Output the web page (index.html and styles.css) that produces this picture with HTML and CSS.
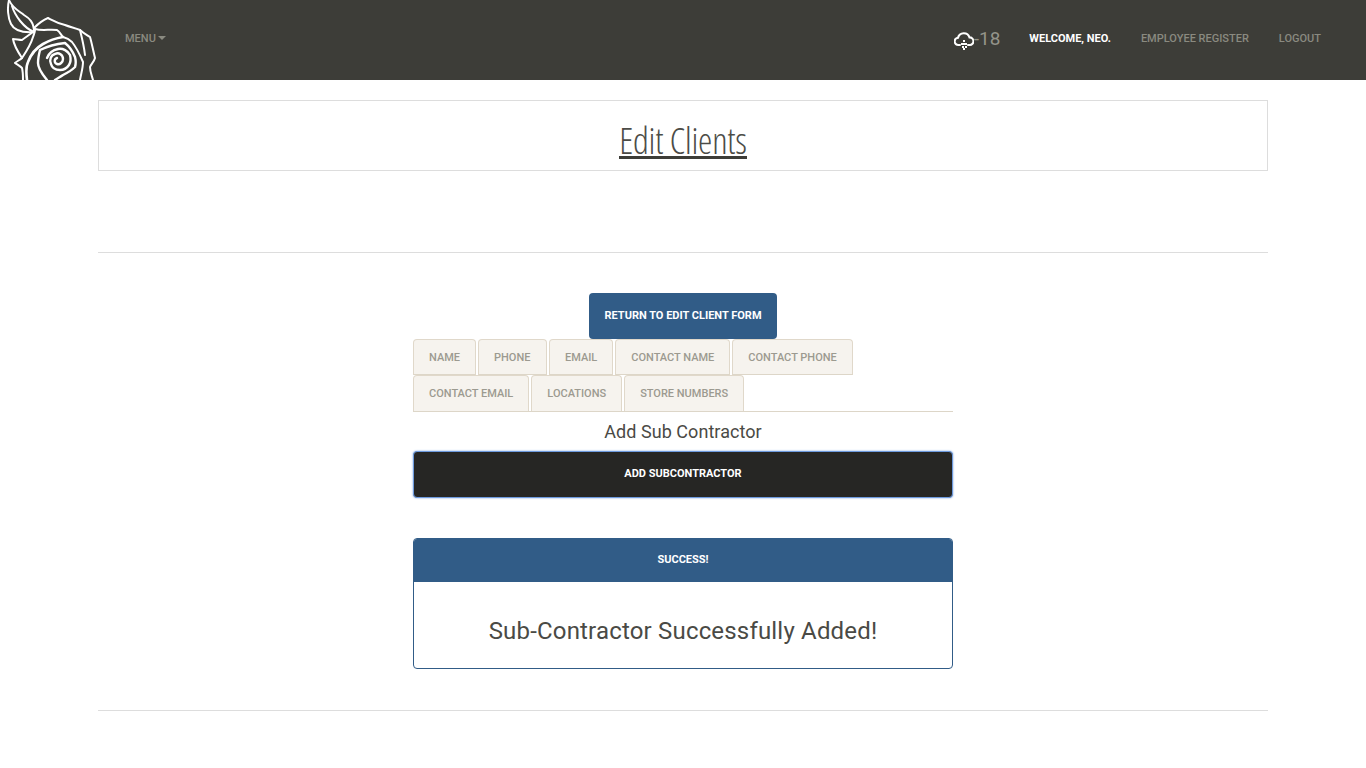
FILE: index.html
```html
<!DOCTYPE html>
<html lang="en">
<head>
<meta charset="utf-8">
<title>Edit Clients</title>
<link rel="stylesheet" href="styles.css">
</head>
<body>
<header class="topbar">
  <div class="nav-left">
    <svg class="logo" viewBox="0 0 100 80" fill="none" stroke="#fff" stroke-width="2" stroke-linejoin="round" stroke-linecap="round">
      <path d="M9 0C7 8 8 18 11 24C14 30 20 33 34 32"/>
      <path d="M9 0C12 8 19 11 24 15C29 18 34 22 34 32"/>
      <path d="M12 6C15 16 24 28 34 32"/>
      <path d="M34 28C38 24 43 20 48 18C52 20 57 23 65 25C70 27 75 28 80 30C83 33 87 35 90 37C92 44 93 50 95 58C94 62 91 64 90 67C90 72 92 76 93 80"/>
      <path d="M33 32C29 35 26 37 22 40C19 40 16 39 13 39C14 46 18 52 22 58C20 60 17 61 15 63C18 65 20 66 22 68C23 72 23 76 23 80"/>
      <path d="M35 29C42 31 50 29 57 30C60 32 61 35 63 37C67 38 70 40 72 42C76 47 80 55 83 62C83 68 81 74 80 80"/>
      <path d="M80 30C82 38 84 46 85 55"/>
      <path stroke-width="2.6" d="M27 80C26 72 26 66 28 62C31 54 36 48 43 44C50 40 57 38 63 37"/>
      <path d="M22 58C26 52 31 44 33 37C34 34 35 32 35 30"/>
      <path stroke-width="2.4" d="M47 80C42 74 38 68 38 63C38 58 39 54 40 50C46 47 56 44 65 43C70 47 73 52 75 57C76 61 76 64 75 67C71 71 67 73 63 75C60 77 58 78 55 80"/>
      <path stroke-width="2.4" d="M47 58C49 53 53 50 58 49C63 48 68 51 70 55C71 59 71 62 69 65C67 68 64 70 60 70C56 70 52 68 51 64C49 60 51 55 55 54C59 52 63 55 63 59C63 62 60 65 57 64C54 63 54 59 57 58"/>
    </svg>
    <a class="nav-link menu" href="#">MENU<span class="caret"></span></a>
  </div>
  <div class="nav-right">
    <div class="weather">
      <svg class="cloud" viewBox="0 0 20 19" fill="none" stroke="#fff" stroke-width="2.1" stroke-linecap="round">
        <path d="M6 14H4.5A3.6 3.6 0 0 1 4 6.8A6 6 0 0 1 15.5 6.4A3.8 3.8 0 0 1 15.8 14H14"/>
        <g class="flakes" stroke="none" fill="#fff">
          <rect x="9" y="9" width="2" height="2"/><rect x="7" y="12" width="2" height="2"/><rect x="9" y="12" width="2" height="2"/><rect x="11" y="12" width="2" height="2"/><rect x="8" y="15" width="2" height="2"/><rect x="11" y="15" width="2" height="2"/><rect x="9" y="17" width="2" height="2"/>
        </g>
      </svg>
      <span class="temp">-18</span>
    </div>
    <span class="nav-link welcome">WELCOME, NEO.</span>
    <a class="nav-link" href="#">EMPLOYEE REGISTER</a>
    <a class="nav-link" href="#">LOGOUT</a>
  </div>
</header>
<main class="page">
  <div class="title-box"><h1 class="title">Edit Clients</h1></div>
  <hr class="rule rule-top">
  <section class="content">
    <a class="btn-return" href="#">RETURN TO EDIT CLIENT FORM</a>
    <ul class="tabs">
      <li class="tab">NAME</li>
      <li class="tab tab-wide">PHONE</li>
      <li class="tab">EMAIL</li>
      <li class="tab">CONTACT NAME</li>
      <li class="tab">CONTACT PHONE</li>
      <li class="tab">CONTACT EMAIL</li>
      <li class="tab">LOCATIONS</li>
      <li class="tab">STORE NUMBERS</li>
    </ul>
    <h2 class="sub-title">Add Sub Contractor</h2>
    <button class="btn-add" type="button">ADD SUBCONTRACTOR</button>
    <div class="panel">
      <div class="panel-head">SUCCESS!</div>
      <div class="panel-body">Sub-Contractor Successfully Added!</div>
    </div>
  </section>
  <hr class="rule rule-bottom">
</main>
</body>
</html>
```
FILE: styles.css
```css
* { box-sizing: border-box; }
html, body { margin: 0; padding: 0; }
body { background: #fff; color: #3d3d38; font-family: Roboto, "Liberation Sans", sans-serif; height: 768px; overflow: hidden; }
a { text-decoration: none; color: inherit; }

.topbar { height: 80px; background: #3d3d38; display: flex; justify-content: space-between; align-items: center; }
.nav-left { display: flex; align-items: center; height: 80px; }
.logo { width: 100px; height: 80px; display: block; }
.nav-link { font-size: 11px; font-weight: 500; color: #8a8a80; }
.menu { margin-left: 25px; display: flex; align-items: center; margin-top: -4px; }
.caret { width: 0; height: 0; margin-left: 2px; border-left: 4px solid transparent; border-right: 4px solid transparent; border-top: 4px solid #8a8a80; }
.nav-right { display: flex; align-items: center; padding-right: 45px; margin-top: -4px; }
.weather { display: flex; align-items: center; margin-right: 29px; }
.cloud { width: 20px; height: 19px; display: block; margin-top: 4px; }
.flakes { shape-rendering: crispEdges; }
.temp { font-size: 19px; color: #94948a; }
.welcome { color: #fff; font-weight: 700; margin-right: 30px; }
.nav-right a + a { margin-left: 30px; }

.page { width: 1170px; margin: 20px auto 0; }
.title-box { height: 71px; border: 1px solid #ddd; display: flex; justify-content: center; }
.title { margin: 21px 0 0; height: 37px; font-family: "Open Sans", sans-serif; font-weight: 300; font-stretch: 75%; font-size: 36px; letter-spacing: -0.17px; line-height: 38px; color: #4c4c47; border-bottom: 3px solid #3d3d38; }
.rule { border: 0; border-top: 1px solid #ddd; margin: 0; }
.rule-top { margin-top: 81px; }
.content { width: 540px; margin: 40px auto 0; display: flex; flex-direction: column; align-items: stretch; }
.btn-return { align-self: center; width: 188px; height: 46px; padding-bottom: 2px; background: #315c87; color: #fff; border-radius: 4px; font-size: 11px; font-weight: 700; display: flex; align-items: center; justify-content: center; }
.tabs { list-style: none; margin: 0; padding: 0; display: flex; flex-wrap: wrap; border-bottom: 1px solid #ddd6c8; }
.tab { height: 36px; padding: 0 15px; margin-right: 2px; background: #f6f3ee; border: 1px solid #e0d8ca; border-bottom-color: #ddd6c8; border-radius: 4px 4px 0 0; font-size: 11px; font-weight: 500; color: #9c9a90; display: flex; align-items: center; }
.tab-wide { padding-right: 15.5px; }
.tabs .tab:nth-child(n+6) { border-bottom: 0; }
.sub-title { margin: 0; height: 39px; font-size: 18px; font-weight: 400; letter-spacing: 0.05px; line-height: 39px; text-align: center; color: #4a4a45; }
.btn-add { height: 47px; padding: 0 0 2px; background: #262624; color: #fff; border: 1px solid #6d9ade; border-radius: 4px; box-shadow: 0 0 2px #6d9ade; font: 700 11px Roboto, sans-serif; }
.panel { margin-top: 40px; height: 131px; border: 1px solid #315c87; border-radius: 4px; overflow: hidden; }
.panel-head { height: 43px; padding-bottom: 2px; background: #315c87; color: #fff; font-size: 11px; font-weight: 700; display: flex; align-items: center; justify-content: center; }
.panel-body { font-size: 24px; font-weight: 400; letter-spacing: 0.18px; text-align: center; padding-top: 33px; line-height: 32px; color: #4a4a45; }
.rule-bottom { margin-top: 41px; }
```
